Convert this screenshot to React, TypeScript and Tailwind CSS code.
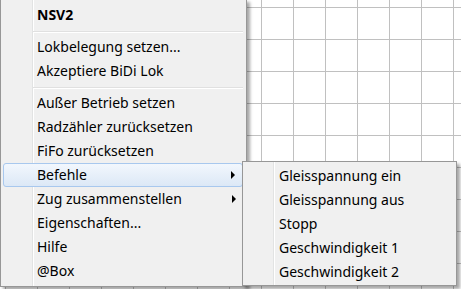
import React from 'react'

type Item = { label: string; bold?: boolean; active?: boolean; sub?: boolean } | 'sep'

const mainItems: Item[] = [
  { label: 'NSV2', bold: true },
  'sep',
  { label: 'Lokbelegung setzen...' },
  { label: 'Akzeptiere BiDi Lok' },
  'sep',
  { label: 'Außer Betrieb setzen' },
  { label: 'Radzähler zurücksetzen' },
  { label: 'FiFo zurücksetzen' },
  { label: 'Befehle', active: true, sub: true },
  { label: 'Zug zusammenstellen', sub: true },
  { label: 'Eigenschaften...' },
  { label: 'Hilfe' },
  { label: '@Box' },
]

const subItems = ['Gleisspannung ein', 'Gleisspannung aus', 'Stopp', 'Geschwindigkeit 1', 'Geschwindigkeit 2']

function Arrow() {
  return (
    <svg width="5" height="8" viewBox="0 0 5 8" className="ml-auto mr-[6px] shrink-0">
      <polygon points="0,0 4,4 0,8" fill="#000" />
    </svg>
  )
}

export default function App() {
  return (
    <div
      className="relative w-[461px] h-[289px] overflow-hidden bg-white bg-[linear-gradient(to_right,#c0c0c0_1px,transparent_1px),linear-gradient(to_bottom,#c0c0c0_1px,transparent_1px)] bg-[size:32px_32px] bg-[position:5px_7px] text-black text-[14px]"
      style={{ fontFamily: '"Noto Sans", "Open Sans", sans-serif' }}
    >
      {/* main menu */}
      <div className="absolute left-0 top-[-1px] w-[247px] flex flex-col border border-[#979797] bg-[#f0f0f0] bg-[linear-gradient(to_right,transparent_31px,#e2e3e3_31px,#e2e3e3_32px,#fff_32px,#fff_33px,transparent_33px)] pl-[2px] pr-[3px] pt-[3px] pb-[3px] shadow-[3px_3px_3px_rgba(0,0,0,0.35)]">
        {mainItems.map((it, i) =>
          it === 'sep' ? (
            <div key={i} className="h-[8px] pt-[4px] pl-[30px]">
              <div className="h-[2px] border-t border-[#e0e0e0] border-b border-b-white" />
            </div>
          ) : (
            <div
              key={i}
              className={`flex items-center h-[24px] ${
                it.active
                  ? 'rounded-[3px] border border-[#a8c8ee] bg-gradient-to-b from-[#f2f7fd] to-[#dce8f6] pl-[33px] pr-[-1px]'
                  : 'pl-[34px]'
              } ${it.bold ? 'font-bold' : ''}`}
            >
              <span className="whitespace-nowrap leading-none">{it.label}</span>
              {it.sub && <Arrow />}
            </div>
          )
        )}
      </div>

      {/* submenu */}
      <div className="absolute left-[242px] top-[161px] w-[215px] flex flex-col border border-[#979797] bg-[#f0f0f0] bg-[linear-gradient(to_right,transparent_30px,#e2e3e3_30px,#e2e3e3_31px,#fff_31px,#fff_32px,transparent_32px)] pl-[2px] pr-[3px] pt-[2px] pb-[1px] shadow-[3px_3px_3px_rgba(0,0,0,0.35)]">
        {subItems.map((s) => (
          <div key={s} className="flex items-center h-[24px] pl-[34px]">
            <span className="whitespace-nowrap leading-none">{s}</span>
          </div>
        ))}
      </div>
    </div>
  )
}
